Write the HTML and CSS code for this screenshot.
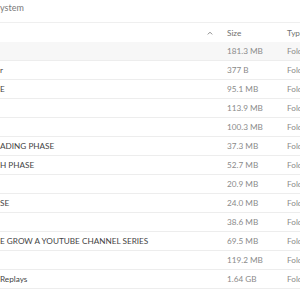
FILE: index.html
```html
<!DOCTYPE html>
<html lang="en">

<head>
    <meta charset="UTF-8">
    <meta name="viewport" content="width=device-width, initial-scale=1.0">
    <title>File System</title>
    <link rel="stylesheet" href="styles.css">
</head>

<body>
    <div class="page">
        <div class="crumb">ystem</div>

        <div class="files">
            <div class="row head">
                <div class="name">
                    <span class="sort">
                        <svg width="6" height="4" viewBox="0 0 6 4"><path d="M0.8 3.4 L3 1.2 L5.2 3.4" fill="none" stroke="#8a8a8a" stroke-width="1"/></svg>
                    </span>
                </div>
                <div class="size">Size</div>
                <div class="type">Type</div>
            </div>

            <div class="row active">
                <div class="name"></div>
                <div class="size">181.3 MB</div>
                <div class="type">Folder</div>
            </div>
            <div class="row">
                <div class="name">r</div>
                <div class="size">377 B</div>
                <div class="type">Folder</div>
            </div>
            <div class="row">
                <div class="name">E</div>
                <div class="size">95.1 MB</div>
                <div class="type">Folder</div>
            </div>
            <div class="row">
                <div class="name"></div>
                <div class="size">113.9 MB</div>
                <div class="type">Folder</div>
            </div>
            <div class="row">
                <div class="name"></div>
                <div class="size">100.3 MB</div>
                <div class="type">Folder</div>
            </div>
            <div class="row">
                <div class="name">ADING PHASE</div>
                <div class="size">37.3 MB</div>
                <div class="type">Folder</div>
            </div>
            <div class="row">
                <div class="name">H PHASE</div>
                <div class="size">52.7 MB</div>
                <div class="type">Folder</div>
            </div>
            <div class="row">
                <div class="name"></div>
                <div class="size">20.9 MB</div>
                <div class="type">Folder</div>
            </div>
            <div class="row">
                <div class="name">SE</div>
                <div class="size">24.0 MB</div>
                <div class="type">Folder</div>
            </div>
            <div class="row">
                <div class="name"></div>
                <div class="size">38.6 MB</div>
                <div class="type">Folder</div>
            </div>
            <div class="row">
                <div class="name">E GROW A YOUTUBE CHANNEL SERIES</div>
                <div class="size">69.5 MB</div>
                <div class="type">Folder</div>
            </div>
            <div class="row">
                <div class="name"></div>
                <div class="size">119.2 MB</div>
                <div class="type">Folder</div>
            </div>
            <div class="row">
                <div class="name">Replays</div>
                <div class="size">1.64 GB</div>
                <div class="type">Folder</div>
            </div>
        </div>
    </div>
</body>

</html>
```

FILE: styles.css
```css
html, body {
    margin: 0;
    padding: 0;
    background: #ffffff;
    overflow: hidden;
}

.page {
    width: 340px;
    font-family: 'Lato', sans-serif;
    font-size: 8.2px;
    color: #4a4a4a;
}

.crumb {
    height: 23px;
    padding-top: 2px;
    line-height: 12px;
    font-size: 9px;
    color: #7a7a7a;
    box-sizing: border-box;
    border-bottom: 1px solid #efefef;
}

.files {
    display: flex;
    flex-direction: column;
}

.row {
    display: grid;
    grid-template-columns: 227px 60px 1fr;
    height: 19px;
    align-items: center;
    border-bottom: 1px solid #ededed;
    box-sizing: border-box;
}

.row.head {
    border-bottom: none;
    color: #777777;
}

.row.active {
    background: #f7f7f7;
}

.name {
    white-space: nowrap;
    overflow: hidden;
    color: #444444;
}

.head .name {
    display: flex;
    justify-content: flex-end;
    padding-right: 14px;
}

.sort {
    display: flex;
}

.size {
    color: #8a8a8a;
}

.type {
    color: #8a8a8a;
}

.head .size,
.head .type {
    color: #6f6f6f;
}
```
